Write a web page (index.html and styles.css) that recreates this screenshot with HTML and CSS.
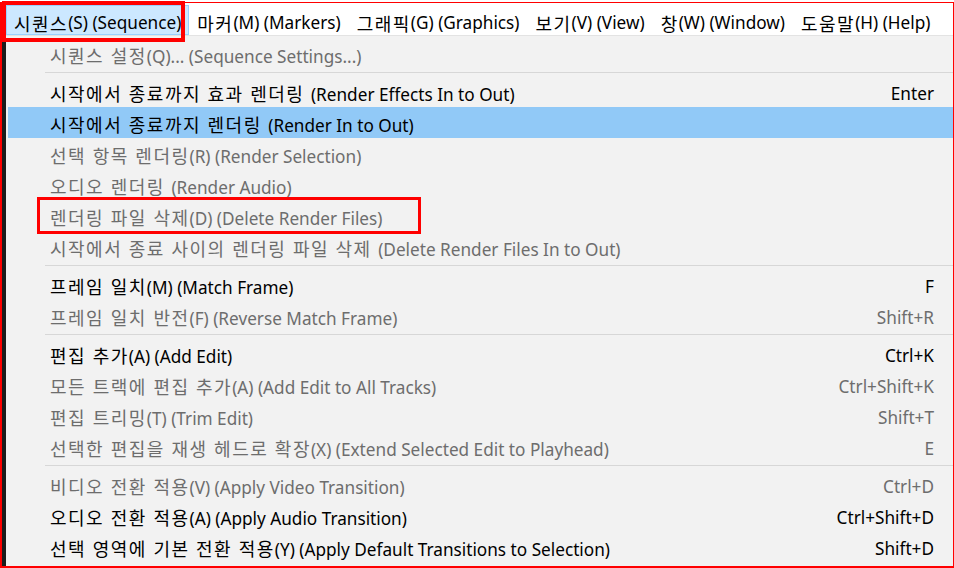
FILE: index.html
```html
<!DOCTYPE html>
<html lang="ko">
<head>
<meta charset="utf-8">
<title>Sequence menu</title>
<link rel="stylesheet" href="styles.css">
</head>
<body>
<div class="screen">
  <div class="edge"></div>
  <div class="app">
    <nav class="menubar">
      <div class="top-item active"><span class="ko">시퀀스</span>(S) (Sequence)</div>
      <div class="top-item"><span class="ko">마커</span>(M) (Markers)</div>
      <div class="top-item"><span class="ko">그래픽</span>(G) (Graphics)</div>
      <div class="top-item"><span class="ko">보기</span>(V) (View)</div>
      <div class="top-item"><span class="ko">창</span>(W) (Window)</div>
      <div class="top-item"><span class="ko">도움말</span>(H) (Help)</div>
    </nav>
    <div class="dropdown">
      <div class="row off"><span><span class="ko">시퀀스 설정</span>(Q)... (Sequence Settings...)</span><span></span></div>
      <div class="sep"></div>
      <div class="row"><span><span class="ko">시작에서 종료까지 효과 렌더링 </span>(Render Effects In to Out)</span><span>Enter</span></div>
      <div class="row hover"><span><span class="ko">시작에서 종료까지 렌더링 </span>(Render In to Out)</span><span></span></div>
      <div class="row off"><span><span class="ko">선택 항목 렌더링</span>(R) (Render Selection)</span><span></span></div>
      <div class="row off"><span><span class="ko">오디오 렌더링 </span>(Render Audio)</span><span></span></div>
      <div class="row off"><span><span class="ko">렌더링 파일 삭제</span>(D) (Delete Render Files)</span><span></span></div>
      <div class="row off"><span><span class="ko">시작에서 종료 사이의 렌더링 파일 삭제 </span>(Delete Render Files In to Out)</span><span></span></div>
      <div class="sep"></div>
      <div class="row"><span><span class="ko">프레임 일치</span>(M) (Match Frame)</span><span>F</span></div>
      <div class="row off"><span><span class="ko">프레임 일치 반전</span>(F) (Reverse Match Frame)</span><span>Shift+R</span></div>
      <div class="sep"></div>
      <div class="row"><span><span class="ko">편집 추가</span>(A) (Add Edit)</span><span>Ctrl+K</span></div>
      <div class="row off"><span><span class="ko">모든 트랙에 편집 추가</span>(A) (Add Edit to All Tracks)</span><span>Ctrl+Shift+K</span></div>
      <div class="row off"><span><span class="ko">편집 트리밍</span>(T) (Trim Edit)</span><span>Shift+T</span></div>
      <div class="row off"><span><span class="ko">선택한 편집을 재생 헤드로 확장</span>(X) (Extend Selected Edit to Playhead)</span><span>E</span></div>
      <div class="sep"></div>
      <div class="row off"><span><span class="ko">비디오 전환 적용</span>(V) (Apply Video Transition)</span><span>Ctrl+D</span></div>
      <div class="row"><span><span class="ko">오디오 전환 적용</span>(A) (Apply Audio Transition)</span><span>Ctrl+Shift+D</span></div>
      <div class="row"><span><span class="ko">선택 영역에 기본 전환 적용</span>(Y) (Apply Default Transitions to Selection)</span><span>Shift+D</span></div>
    </div>
  </div>
  <div class="mark mark-top"></div>
  <div class="mark mark-item"></div>
</div>
</body>
</html>
```
FILE: styles.css
```css
* { box-sizing: border-box; }
html, body {
  margin: 0;
  padding: 0;
  background: #ffffff;
}
body {
  font-family: "Segoe UI", "Noto Sans", "Noto Sans CJK KR", sans-serif;
  font-size: 17.2px;
  color: #000;
}
.ko {
  font-family: "Noto Sans CJK KR", sans-serif;
  font-size: 18px;
  letter-spacing: 1.5px;
}
.screen {
  position: relative;
  width: 954px;
  height: 566px;
  margin-top: 2px;
  display: flex;
  border-top: 1px solid #ff0000;
  border-right: 1px solid #ff0000;
  border-bottom: 2px solid #ff0000;
  border-left: 2px solid #ff0000;
}
.edge {
  width: 4px;
  background: #1c1c1c;
  flex: none;
}
.app {
  flex: 1;
  display: flex;
  flex-direction: column;
  min-width: 0;
}
.menubar {
  height: 33px;
  display: flex;
  align-items: stretch;
  background: #ffffff;
  border-bottom: 1px solid #e3e3e3;
  padding-top: 2px;
  white-space: nowrap;
}
.top-item {
  padding: 5px 7px 0 7px;
  display: flex;
  align-items: center;
  line-height: 1;
  border: 1px solid transparent;
}
.top-item.active {
  background: #cce8ff;
  border-color: #99d1ff;
}
.dropdown {
  flex: 1;
  background: #f2f2f2;
  padding: 2px 0 0 2px;
  display: flex;
  flex-direction: column;
}
.row {
  height: 31px;
  display: flex;
  justify-content: space-between;
  align-items: center;
  padding: 4px 19px 0 42px;
  white-space: nowrap;
  line-height: 1;
}
.row.off { color: #6d6d6d; }
.row.hover { background: #91c9f7; }
.sep {
  height: 7px;
  margin-left: 37px;
  display: flex;
  align-items: center;
}
.sep::before {
  content: "";
  display: block;
  width: 100%;
  height: 1px;
  background: #d7d7d7;
}
.mark {
  position: absolute;
  border: 3px solid #ff0000;
  pointer-events: none;
}
.mark-top {
  left: 0;
  top: -2px;
  width: 183px;
  height: 41px;
  border-width: 4px;
}
.mark-item {
  left: 35px;
  top: 194px;
  width: 384px;
  height: 37px;
}
```
